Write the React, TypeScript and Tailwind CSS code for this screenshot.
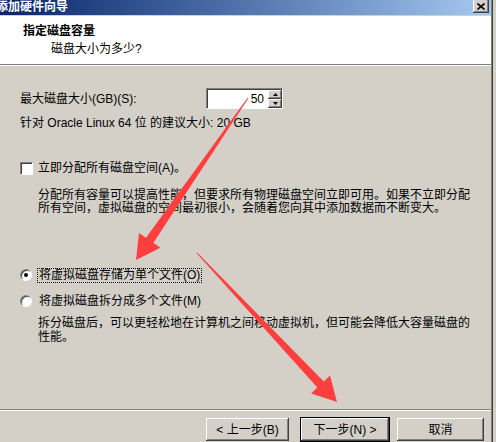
import React from "react";

const raised =
  "shadow-[inset_-1px_-1px_0_#404040,inset_1px_1px_0_#ffffff,inset_-2px_-2px_0_#808080]";

const Button = ({ label, w, primary }: { label: string; w: string; primary?: boolean }) => (
  <div
    className={`${w} h-[23px] flex items-center justify-center bg-[#d4d0c8] text-[12px] text-black ${raised} ${
      primary ? "outline outline-1 outline-black" : ""
    }`}
  >
    {label}
  </div>
);

const App: React.FC = () => {
  return (
    <div className="relative w-[496px] h-[442px] overflow-hidden flex bg-[#d4d0c8] font-['Liberation_Sans','Noto_Sans_CJK_SC',sans-serif] text-[12px] text-black">
      {/* dialog */}
      <div className="w-[491px] h-full flex flex-col">
        {/* title bar */}
        <div className="h-[15px] flex items-center bg-gradient-to-r from-[#0a246a] to-[#a6caf0] pr-[2px]">
          <span className="ml-[-4px] text-white font-bold text-[12px] leading-[13px] whitespace-nowrap">
            添加硬件向导
          </span>
          <div className={`ml-auto self-start mt-[-2px] w-[16px] h-[15px] bg-[#d4d0c8] flex items-center justify-center pt-[1px] ${raised}`}>
            <svg width="8" height="7" viewBox="0 0 8 7">
              <path d="M0.5 0.5 L7.5 6.5 M7.5 0.5 L0.5 6.5" stroke="#000" strokeWidth="1.6" />
            </svg>
          </div>
        </div>
        <div className="h-[1px] bg-[#d4d0c8]" />

        {/* header */}
        <div className="h-[48px] bg-white pt-[8px]">
          <div className="pl-[23px] h-[14px] leading-[14px] font-bold whitespace-nowrap">指定磁盘容量</div>
          <div className="pl-[51px] mt-[4px] h-[14px] leading-[14px] whitespace-nowrap">磁盘大小为多少?</div>
        </div>
        <div className="h-[1px] bg-[#808080]" />
        <div className="h-[1px] bg-white" />

        {/* body */}
        <div className="flex flex-col pl-[20px]">
          <div className="mt-[22px] h-[21px] flex items-center">
            <span className="w-[186px] whitespace-nowrap">最大磁盘大小(GB)(S):</span>
            <div className="w-[77px] h-[21px] flex bg-white border border-t-[#808080] border-l-[#808080] border-b-white border-r-white shadow-[inset_1px_1px_0_#404040]">
              <div className="flex-1 flex items-center justify-end pr-[4px] pt-[1px]">50</div>
              <div className="w-[14px] mt-[1px] flex flex-col">
                <div className={`h-[9px] bg-[#d4d0c8] flex items-center justify-center ${raised}`}>
                  <svg width="5" height="3" viewBox="0 0 5 3">
                    <path d="M2.5 0 L5 3 L0 3 Z" fill="#000" />
                  </svg>
                </div>
                <div className={`h-[9px] bg-[#d4d0c8] flex items-center justify-center ${raised}`}>
                  <svg width="5" height="3" viewBox="0 0 5 3">
                    <path d="M0 0 L5 0 L2.5 3 Z" fill="#000" />
                  </svg>
                </div>
              </div>
            </div>
          </div>

          <div className="mt-[7px] h-[14px] leading-[14px] whitespace-nowrap">
            针对 Oracle Linux 64 位 的建议大小: 20 GB
          </div>

          <div className="mt-[31px] h-[14px] flex items-center">
            <div className="w-[13px] h-[13px] bg-white border border-t-[#808080] border-l-[#808080] border-b-white border-r-white shadow-[inset_1px_1px_0_#404040]" />
            <span className="ml-[5px] leading-[14px] whitespace-nowrap">立即分配所有磁盘空间(A)。</span>
          </div>

          <div className="mt-[14px] pl-[18px] leading-[13px] whitespace-nowrap">
            <div>分配所有容量可以提高性能，但要求所有物理磁盘空间立即可用。如果不立即分配</div>
            <div>所有空间，虚拟磁盘的空间最初很小，会随着您向其中添加数据而不断变大。</div>
          </div>

          <div className="mt-[52px] h-[16px] flex items-center">
            <div className="w-[12px] h-[12px] rounded-full bg-white border border-t-[#808080] border-l-[#808080] border-b-white border-r-white shadow-[inset_1px_1px_0_#404040] flex items-center justify-center">
              <div className="w-[4px] h-[4px] rounded-full bg-black" />
            </div>
            <span className="ml-[5px] h-[15px] px-[1px] leading-[13px] border border-dotted border-black whitespace-nowrap">
              将虚拟磁盘存储为单个文件(O)
            </span>
          </div>

          <div className="mt-[10px] h-[16px] flex items-center">
            <div className="w-[12px] h-[12px] rounded-full bg-white border border-t-[#808080] border-l-[#808080] border-b-white border-r-white shadow-[inset_1px_1px_0_#404040]" />
            <span className="ml-[7px] leading-[14px] whitespace-nowrap">将虚拟磁盘拆分成多个文件(M)</span>
          </div>

          <div className="mt-[7px] pl-[18px] leading-[14px] whitespace-nowrap">
            <div>拆分磁盘后，可以更轻松地在计算机之间移动虚拟机，但可能会降低大容量磁盘的</div>
            <div>性能。</div>
          </div>
        </div>

        {/* footer */}
        <div className="mt-auto h-[33px] flex flex-col">
          <div className="h-[1px] bg-[#808080]" />
          <div className="h-[1px] bg-white" />
          <div className="mt-[7px] flex justify-end pr-[7px]">
            <Button label="< 上一步(B)" w="w-[83px]" />
            <div className="w-[12px]" />
            <Button label="下一步(N) >" w="w-[88px]" primary />
            <div className="w-[8px]" />
            <Button label="取消" w="w-[87px]" />
          </div>
        </div>
      </div>

      {/* window edge */}
      <div className="w-[1px] h-full bg-[#808080]" />
      <div className="w-[1px] h-full bg-[#404040]" />
      <div className="flex-1 h-full bg-[#d4d0c8]" />

      {/* red annotation arrows */}
      <svg className="absolute inset-0 pointer-events-none" width="496" height="442" viewBox="0 0 496 442">
        <polygon
          points="248.4,98.3 153.4,242.8 160.4,247.7 136,260 139,232.9 146,237.7 247.6,97.7"
          fill="#ff3f3f"
        />
        <polygon
          points="196.6,253.3 317.3,387.6 311.1,393.4 337,402 330,375.6 323.8,381.4 197.4,252.7"
          fill="#ff3f3f"
        />
      </svg>
    </div>
  );
};

export default App;
